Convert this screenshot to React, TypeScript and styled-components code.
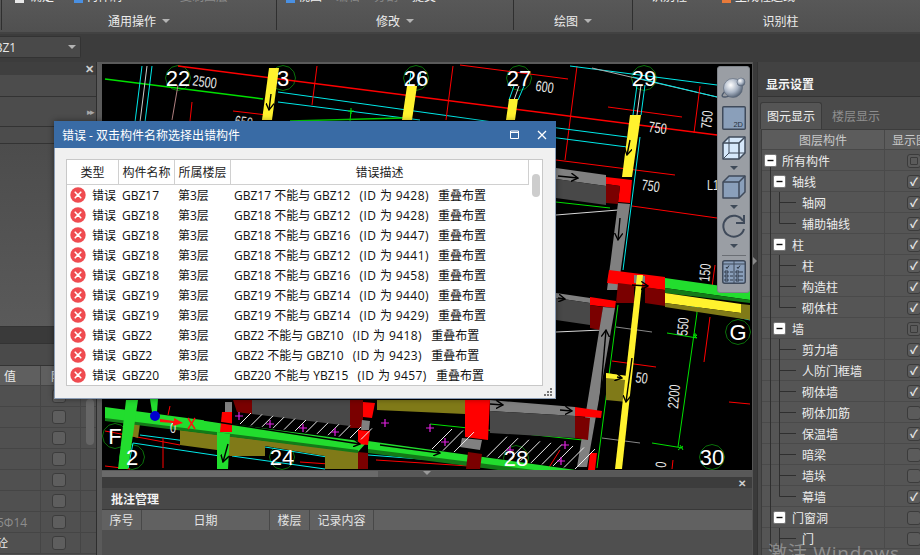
import React from "react";
import styled, { createGlobalStyle } from "styled-components";

const Global = createGlobalStyle`
  html, body { margin: 0; padding: 0; background: #3c3c3c; overflow: hidden; }
  * { box-sizing: border-box; }
  #root { width: 920px; height: 555px; overflow: hidden; }
`;
const FONT = `"Open Sans", "Noto Sans CJK SC", sans-serif`;

const Page = styled.div`
  position: relative; width: 920px; height: 555px; overflow: hidden; display: flex; flex-direction: column;
  font: 12px ${FONT}; color: #e6e6e6; background: #3c3c3c;
`;
/* ---------- ribbon ---------- */
const Ribbon = styled.div`
  flex: 0 0 34px; display: flex; padding-left: 3px; background: linear-gradient(#585858, #505050);
  border-bottom: 2px solid #424242;
`;
const RibbonGroup = styled.div<{ $w: number; $shift?: number }>`
  flex: 0 0 ${(p) => p.$w}px; height: 30px; display: flex; flex-direction: column; border-right: 1px solid #2f2f2f;
  border-left: ${(p) => (p.$w === 276 ? "1px solid #2f2f2f" : "0")}; margin-left: ${(p) => (p.$w === 276 ? "-2px" : "0")};
  padding-left: ${(p) => p.$shift ?? 0}px;
`;
const RibbonItems = styled.div`
  height: 6px; overflow: hidden; display: flex; align-items: flex-end; flex: 0 0 6px; margin-top: -3px;
`;
const RibbonItem = styled.span<{ $ml: number; $dim?: boolean }>`
  margin-left: ${(p) => p.$ml}px; color: ${(p) => (p.$dim ? "#8a8a8a" : "#f0f0f0")}; font-size: 12px; line-height: 6px;
  white-space: nowrap; display: inline-block; transform: translateY(-3px);
`;
const Swatch = styled.i<{ $c: string; $ml: number }>`
  display: block; width: 9px; height: 5px; margin-left: ${(p) => p.$ml}px; background: ${(p) => p.$c}; flex: none;
`;
const RibbonLabel = styled.div`
  flex: 1; display: flex; justify-content: center; align-items: center; gap: 6px; font-size: 12px; color: #ececec;
  padding-top: 9px;
`;
const Caret = styled.i<{ $c?: string }>`
  width: 0; height: 0; border: 4px solid transparent; border-top: 4px solid ${(p) => p.$c ?? "#b4b4b4"}; border-bottom: 0;
  border-left-width: 4px; border-right-width: 4px; display: block;
`;
/* ---------- sub bar ---------- */
const SubBar = styled.div`
  flex: 0 0 28px; padding-top: 2px; background: #3c3c3c;
`;
const Combo = styled.div`
  width: 81px; height: 22px; display: flex; align-items: center; justify-content: space-between;
  padding: 0 4px 0 0; background: #494949; border: 1px solid #333; border-left: 0; border-radius: 0 2px 2px 0;
  overflow: hidden; font-size: 12px; color: #e8e8e8;
`;
const ComboText = styled.span`
  margin-left: -14px;
`;
/* ---------- main ---------- */
const Main = styled.div`
  flex: 1; min-height: 0; display: flex;
`;
const Left = styled.div`
  flex: 0 0 97px; display: flex; flex-direction: column; overflow: hidden; background: #4e4e4e; border-right: 1px solid #2e2e2e;
`;
const LeftHead = styled.div`
  flex: 0 0 13px; background: #3f3f3f; display: flex; justify-content: flex-end; align-items: center; padding-right: 2px;
  color: #cfcfcf; font-size: 11px; font-weight: 700; line-height: 13px;
`;
const LeftBand = styled.div<{ $h: number; $bg?: string }>`
  flex: 0 0 ${(p) => p.$h}px; background: ${(p) => p.$bg ?? "#4c4c4c"}; border-bottom: 1px solid #333;
  display: flex; justify-content: flex-end; align-items: center; padding-right: 3px; color: #a8a8a8; font-size: 9px; letter-spacing: -2px;
`;
const LeftTable = styled.div`
  flex: 1; position: relative; display: flex; flex-direction: column; background: #505050;
`;
const LeftRow = styled.div<{ $head?: boolean; $h?: number }>`
  flex: 0 0 ${(p) => p.$h ?? 21}px; display: grid; grid-template-columns: 41px 40px 1fr; align-items: center;
  background: ${(p) => (p.$head ? "#5f5f5f" : "#505050")}; border-bottom: 1px solid #454545;
`;
const LeftCell = styled.div<{ $dim?: boolean; $ml?: number }>`
  height: 100%; display: flex; align-items: center; justify-content: flex-start; border-right: 1px solid #454545; white-space: nowrap;
  font-size: 12px; color: ${(p) => (p.$dim ? "#8d8d8d" : "#e8e8e8")}; padding-left: ${(p) => p.$ml ?? 0}px; overflow: hidden;
`;
const LeftValue = styled.span<{ $ml: number }>`
  margin-left: ${(p) => p.$ml}px;
`;
const LeftThumb = styled.div`
  position: absolute; left: 86px; top: 33px; width: 8px; height: 46px; background: #666; border-radius: 4px;
`;
const Square = styled.span`
  width: 14px; height: 14px; margin-left: 11px; border: 1px solid #3c3c3c; border-radius: 3px; background: #5e5e5e; display: block;
`;
const Splitter = styled.div`
  flex: 0 0 5px; background: #5a5a5a;
`;
const RightSplit = styled.div`
  flex: 0 0 5px; background: #3a3a3a; display: flex; align-items: center; justify-content: center; padding-bottom: 95px; border-left: 1px solid #555;
`;
const TinyArrow = styled.i`
  width: 0; height: 0; border: 4px solid transparent; border-left: 4px solid #8a8a8a; border-right: 0; display: block;
`;
const Center = styled.div`
  flex: 0 0 650px; display: flex; flex-direction: column; padding-top: 2px; background: #5a5a5a;
`;
const CanvasWrap = styled.div`
  position: relative; flex: 0 0 406px; background: #000; overflow: hidden;
`;
const HScroll = styled.div`
  flex: 0 0 6px; margin-top: 1px; background: linear-gradient(to right, #6a6a6a 276px, #585858 276px); display: flex; justify-content: center;
`;
const Bottom = styled.div`
  flex: 1; display: flex; flex-direction: column; background: #4f4f4f;
`;
const BottomStrip = styled.div`
  flex: 0 0 11px; background: #3c3c3c; display: flex; justify-content: flex-end; align-items: center; padding-right: 6px; font-size: 10px; font-weight: 700; color: #cfcfcf; line-height: 10px;
`;
const BottomTitle = styled.div`
  flex: 0 0 22px; background: #484848; display: flex; align-items: center; padding-left: 9px; font-size: 12px; font-weight: 700; color: #f2f2f2; border-bottom: 1px solid #383838;
`;
const BottomHead = styled.div`
  flex: 0 0 20px; display: flex; background: #616161;
`;
const BottomCol = styled.div<{ $w: number }>`
  flex: 0 0 ${(p) => p.$w}px; display: flex; align-items: center; justify-content: center; border-right: 1px solid #484848;
  font-size: 12px; color: #e4e4e4;
`;
/* ---------- float toolbar ---------- */
const Float = styled.div`
  position: absolute; right: 2px; top: 2px; width: 33px; height: 227px; background: #9a9ea4; border-radius: 3px;
  border: 1px solid #7f848a; display: flex; flex-direction: column; align-items: center; padding-top: 9px;
`;
const FloatCaret = styled.i`
  display: block; width: 0; height: 0; margin: 6px 0 5px; border: 4px solid transparent; border-top: 4px solid #3f4a58; border-bottom: 0;
`;
const FloatRule = styled.div`
  width: 24px; height: 1px; background: #6a6e74; margin: 2px 0 4px;
`;
/* ---------- right panel ---------- */
const Right = styled.div`
  flex: 0 0 163px; background: #4a4a4a; display: flex; flex-direction: column; overflow: hidden; border-left: 1px solid #333;
`;
const RightTitle = styled.div`
  flex: 0 0 35px; padding: 14px 0 0 8px; background: #424242; font-size: 12px; font-weight: 700; color: #f4f4f4; border-bottom: 1px solid #333; line-height: 18px;
`;
const Tabs = styled.div`
  flex: 0 0 32px; display: flex; align-items: flex-end; padding-left: 2px; background: #4a4a4a; gap: 10px;
`;
const Tab = styled.div<{ $on?: boolean }>`
  height: 27px; width: ${(p) => (p.$on ? "62px" : "auto")}; display: flex; align-items: center; justify-content: center; font-size: 12px;
  color: ${(p) => (p.$on ? "#efefef" : "#8f8f8f")}; background: ${(p) => (p.$on ? "#555" : "transparent")};
  border: ${(p) => (p.$on ? "1px solid #3a3a3a" : "0")}; border-bottom: 0; border-radius: 3px 3px 0 0;
`;
const TreeTable = styled.div`
  flex: 1; margin-left: 3px; border-left: 1px solid #3c3c3c; border-top: 1px solid #3c3c3c; display: flex; flex-direction: column; background: #555;
`;
const TreeHead = styled.div`
  flex: 0 0 20px; display: grid; grid-template-columns: 123px 1fr; background: #5c5c5c; color: #c8c8c8; border-bottom: 1px solid #484848; font-size: 12px;
`;
const TreeHeadCell = styled.div<{ $first?: boolean }>`
  display: flex; align-items: center; justify-content: ${(p) => (p.$first ? "center" : "flex-start")}; padding-left: ${(p) => (p.$first ? 0 : 7)}px;
  border-right: ${(p) => (p.$first ? "1px solid #484848" : "0")}; white-space: nowrap; overflow: hidden;
`;
const TreeRow = styled.div`
  flex: 0 0 21px; display: grid; grid-template-columns: 123px 1fr; border-bottom: 1px solid #4a4a4a; height: 21px;
`;
const TreeName = styled.div`
  display: flex; align-items: center; font-size: 12px; color: #ececec; border-right: 1px solid #4a4a4a; white-space: nowrap;
`;
const TreeCheckCell = styled.div`
  display: flex; align-items: center; padding-left: 22px; overflow: hidden;
`;
const TreeCheck = styled.span`
  flex: none; width: 14px; height: 14px; border: 1px solid #3b3b3b; border-radius: 3px; background: #5b5b5b; display: flex; align-items: center; justify-content: center;
  color: #e8e8e8; font-size: 11px; font-weight: 700; line-height: 12px;
`;
const PartMark = styled.i`
  width: 8px; height: 8px; border: 1px solid #3b3b3b; border-radius: 1px; display: block;
`;
const Watermark = styled.div`
  position: absolute; left: 768px; top: 538px; font: 19px ${FONT}; color: rgba(225, 225, 225, 0.42); white-space: nowrap; letter-spacing: .8px;
`;
/* ---------- dialog ---------- */
const Dialog = styled.div`
  position: absolute; left: 54px; top: 121px; width: 502px; height: 278px; background: #f0f0f0; display: flex; flex-direction: column;
  border: 1px solid #8b9db5; border-top: 0; box-shadow: 0 0 6px rgba(0,0,0,.45); color: #111;
`;
const DialogTitle = styled.div`
  flex: 0 0 27px; margin: 0 -1px; background: #396ba5; color: #fff; display: flex; align-items: center; padding: 0 9px 0 8px; font-size: 12px;
`;
const TitleText = styled.span`
  flex: 1;
`;
const TitleBtns = styled.div`
  display: flex; align-items: center; gap: 18px;
`;
const DialogBody = styled.div`
  flex: 1; padding: 11px 12px 12px 11px; display: flex;
`;
const ErrTable = styled.div`
  position: relative; flex: 1; background: #fff; border: 1px solid #c8c8c8; display: flex; flex-direction: column; overflow: hidden;
`;
const ErrHead = styled.div`
  flex: 0 0 25px; display: grid; grid-template-columns: 52px 56px 56px 298px; height: 25px;
`;
const ErrHeadCell = styled.div`
  display: flex; align-items: center; justify-content: center; border-right: 1px solid #d0d0d0; border-bottom: 1px solid #d0d0d0; font-size: 12px; color: #222; white-space: nowrap;
`;
const ErrRow = styled.div`
  flex: 0 0 20px; display: grid; grid-template-columns: 52px 56px 56px 1fr; align-items: center; font-size: 12px; color: #111;
`;
const ErrType = styled.div`
  display: flex; align-items: center; gap: 6px; padding-left: 3px;
`;
const ErrCell = styled.div`
  padding-left: 3px; white-space: pre;
`;
const IdPart = styled.span`
  margin: 0 3px 0 3px; letter-spacing: .4px;
`;
const Thumb = styled.div`
  position: absolute; right: 2px; top: 14px; width: 8px; height: 23px; background: #cdcdcd; border-radius: 4px;
`;
const Grip = styled.svg`
  position: absolute; right: 2px; bottom: 1px;
`;
/* ---------- drawing text ---------- */
const BubbleText = styled.text`
  font: 22px "Liberation Sans", sans-serif; fill: #fff; text-anchor: middle;
`;
const DimText = styled.text`
  font: 15px "Liberation Sans", sans-serif; fill: #e6e6e6; text-anchor: middle;
`;

type L = [number, number, number, number, string, number?];
const R = "#ff0000", C = "#00e8e8", G = "#00e000", W = "#d8d8d8";
const lines: L[] = [
  [105, 79, 263, 99, G, 1.5], [142, 66, 135, 122, C], [152, 66, 145, 122, C], [147, 66, 140, 122, "#cccccc"],
  [178, 66, 717, 135, R, 1.3], [278, 92, 500, 123, C], [278, 102, 420, 120, C], [233, 111, 267, 115, R],
  [317, 66, 312, 105, R], [453, 66, 446, 120, R], [178, 85, 172, 120, "#b08080"], [192, 102, 190, 121, R],
  [460, 65, 568, 79, R], [577, 66, 565, 160, R], [608, 107, 682, 117, R], [570, 66, 717, 85, C], [592, 68, 717, 97, "#aaaaaa"],
  [633, 77, 717, 97, C], [700, 86, 694, 133, R], [550, 127, 627, 137, C], [550, 137, 627, 147, C], [556, 160, 675, 175, R],
  [632, 206, 717, 218, R], [556, 215, 618, 210, W], [556, 202, 610, 208, G], [637, 85, 633, 115, C], [645, 85, 641, 115, C],
  [641, 85, 637, 115, W], [640, 137, 623, 270, C], [290, 121, 402, 118, G, 1.6], [351, 111, 350, 121, G], [514, 86, 509, 100, C], [524, 86, 518, 100, C],
  [519, 86, 514, 100, W], [411, 72, 409, 86, C], [421, 72, 418, 86, C], [715, 265, 712, 287, R],
  [618, 305, 597, 468, G], [697, 313, 678, 447, G], [667, 333, 697, 338, G], [652, 443, 683, 448, G],
  [710, 317, 704, 362, R], [612, 361, 656, 367, R], [729, 402, 750, 404, R], [673, 460, 672, 469, R],
  [556, 332, 602, 330, W], [616, 327, 652, 332, "#888"], [602, 438, 640, 443, "#888"], [665, 300, 750, 320, C],
  [140, 435, 217, 445, C], [133, 443, 220, 456, C], [105, 431, 180, 445, R], [163, 438, 163, 468, R], [133, 443, 128, 469, C],
  [105, 466, 130, 469, R], [232, 456, 325, 469, C], [300, 462, 358, 466, R], [265, 447, 358, 462, C], [368, 455, 460, 462, C],
  [376, 460, 500, 468, R], [170, 406, 168, 415, R], [560, 450, 548, 469, R],
  [695, 300, 697, 313, G], [237, 411, 362, 426, G], [430, 424, 583, 440, G],
];
type P = [string, string];
const polys: P[] = [
  ["269,68 279,68 272,120 262,120", "#fff22e"], ["407,86 417,86 412,120 402,120", "#fff22e"], ["509,99 518,99 515,120 506,120", "#fff22e"],
  ["630,115 641,115 632,177 622,177", "#fff22e"],
  ["556,168 606,175 606,186 556,179", "#808080"], ["556,179 606,186 606,205 556,198", "#484848"],
  ["606,177 632,180 630,203 618,202 620,186 606,184", "#ff0000"], ["606,184 620,186 618,204 606,203", "#7a0000"],
  ["618,203 630,204 618,290 607,290", "#808080"],
  ["665,278 750,290 750,300 665,288", "#22dd2e"], ["665,288 750,300 750,303 665,293", "#137a18"],
  ["665,293 741,304 741,313 665,303", "#fff22e"], ["741,304 750,305 750,320 665,307 665,303 741,313", "#807a18"],
  ["609,270 665,277 665,290 607,283", "#ff0000"], ["618,283 634,285 634,303 616,303", "#7a0000"], ["645,287 665,290 665,306 645,303", "#7a0000"],
  ["634,275 645,276 645,284 634,283", "#808080"],
  ["556,293 590,298 590,303 556,298", "#808080"], ["556,298 590,303 590,325 556,320", "#484848"],
  ["590,297 616,301 615,308 590,305", "#ff0000"], ["590,305 603,307 600,330 590,328", "#7a0000"],
  ["603,307 615,308 587,467 577,467", "#808080"],
  ["606,373 627,376 627,402 606,400", "#807a18"], ["606,373 627,376 626,380 606,378", "#fff22e"],
  ["637,275 643,275 622,469 615,469", "#fff22e"],
  ["490,400 575,407 575,416 490,411", "#808080"], ["490,411 575,416 575,438 490,433", "#484848"],
  ["575,407 602,411 601,418 575,416", "#ff0000"], ["575,416 590,418 588,440 575,438", "#7a0000"], ["590,453 597,453 595,470 588,470", "#ff0000"],
  /* lower beams */
  ["252,400 350,400 350,426 252,414", "#484848"], ["233,400 252,400 252,414 237,412", "#7a0000"],
  ["350,400 363,400 363,428 350,428", "#7a0000"], ["377,400 465,400 465,414 377,410", "#807a18"],
  ["180,430 358,452 358,469 325,469 325,456 265,446 265,456 230,456 217,450 180,445", "#807a18"],
  ["133,423 140,424 138,438 131,436", "#807a18"],
  ["105,407 367,442 358,452 105,420", "#22dd2e"], ["105,418 358,450 358,453 105,421", "#137a18"],
  ["368,441 590,472 590,480 368,451", "#22dd2e"], ["368,449 590,477 590,482 368,453", "#137a18"],
  ["126,400 138,400 128,469 118,469", "#22dd2e"], ["217,432 230,434 228,469 217,469", "#22dd2e"],
  ["225,402 232,402 232,412 225,412", "#808080"], ["222,412 232,412 232,432 220,432", "#ff0000"],
  ["363,402 375,403 372,418 363,417", "#ff0000"], ["362,420 370,421 369,430 361,430", "#808080"], ["358,430 370,431 368,445 358,444", "#ff0000"],
  ["358,452 368,453 368,469 358,469", "#7a0000"],
  ["465,400 490,400 488,440 465,437", "#ff0000"], ["462,438 482,440 480,450 460,447", "#808080"], ["468,452 482,454 480,469 466,469", "#7a0000"],
  ["150,399 158,399 157,412 152,412", "#22dd2e"],
];
const hatches: [number, number, number, number][] = [];
for (let i = 0; i < 12; i++) hatches.push([240 + i * 11, 424 + i * 1.4, 251 + i * 11, 413 + i * 1.4]);
for (let i = 0; i < 14; i++) {
  const x = 432 + i * 11;
  const y = 449 + (x - 432) * 0.14;
  if (x < 462 || x > 482) hatches.push([x, y, x + 20, y - 20]);
}
const pluses: [number, number][] = [[239, 416], [270, 424], [303, 428], [335, 432], [385, 423], [565, 445], [561, 461], [430, 428], [445, 442], [510, 450]];
const hex = (x: number, y: number, r: number) =>
  Array.from({ length: 12 }, (_, i) => `${(x + r * Math.cos((i * Math.PI) / 6)).toFixed(1)},${(y + r * Math.sin((i * Math.PI) / 6)).toFixed(1)}`).join(" ");
const bubbles: [string, number, number][] = [
  ["22", 178, 78], ["3", 283, 78], ["26", 416, 78], ["27", 519, 78], ["29", 644, 78], ["G", 738, 332], ["30", 712, 457], ["F", 115, 436], ["2", 132, 457], ["24", 282, 457], ["28", 516, 458],
];
const dims: [string, number, number, number][] = [
  ["2500", 204, 87, 8], ["600", 544, 92, 8], ["750", 657, 133, 8], ["750", 712, 120, -85], ["750", 650, 191, 8], ["550", 688, 327, -85],
  ["2200", 679, 397, -85], ["150", 710, 273, -85], ["50", 641, 383, 8], ["650", 243, 127, 8], ["L1", 713, 190, 0], ["0", 666, 465, -85], ["0", 173, 433, 0],
];
const arrows: [number, number, number, number][] = [
  [271, 94, 269, 110], [558, 176, 578, 178], [630, 140, 627, 155], [620, 218, 618, 240], [558, 298, 565, 299], [632, 358, 626, 402], [600, 400, 606, 330],
  [632, 285, 648, 286], [617, 377, 622, 378], [560, 410, 572, 411], [228, 444, 223, 462], [204, 420, 360, 444], [380, 445, 440, 453], [490, 404, 503, 405],
];

const Cad = () => (
  <svg width={650} height={406} viewBox="102 64 650 406" style={{ display: "block" }}>
    <defs>
      <marker id="ah" markerWidth="6" markerHeight="6" refX="5" refY="3" orient="auto">
        <path d="M0 0L5 3L0 6" fill="none" stroke="#000" strokeWidth="1" />
      </marker>
    </defs>
    {bubbles.map(([t, x, y]) => <polygon key={t + x} points={hex(x, y, 12.5)} fill="none" stroke="#0a700a" strokeWidth={1} />)}
    {lines.map(([a, b, c, d, s, w], i) => <line key={i} x1={a} y1={b} x2={c} y2={d} stroke={s} strokeWidth={w ?? 1} />)}
    {polys.map(([p, f], i) => <polygon key={i} points={p} fill={f} />)}
    {hatches.map(([a, b, c, d], i) => <line key={i} x1={a} y1={b} x2={c} y2={d} stroke="#eeeeee" strokeWidth={1} />)}
    {pluses.map(([x, y], i) => <path key={i} d={`M${x - 4} ${y}H${x + 4}M${x} ${y - 4}V${y + 4}`} stroke="#e020e0" strokeWidth={1.2} />)}
    {arrows.map(([a, b, c, d], i) => <line key={i} x1={a} y1={b} x2={c} y2={d} stroke="#000" strokeWidth={1.4} markerEnd="url(#ah)" />)}
    {bubbles.map(([t, x, y]) => <BubbleText key={t + x} x={x} y={y + 8}>{t}</BubbleText>)}
    {dims.map(([t, x, y, r]) => <DimText key={t + x} transform={`translate(${x} ${y}) rotate(${r}) scale(.72 1)`}>{t}</DimText>)}
    <path d="M351 108l0 6M348 111h6M697 335l-3 3M694 335l3 3" stroke="#00e000" />
    <path d="M697 335l-4 0M695 333v5M680 445l3 5M678 450l5-4" stroke="#00e000" />
    <circle cx={155} cy={416} r={5} fill="#0000d0" />
    <path d="M160 419l14 2 0-3 9 5-10 3 0-3-13-1z" fill="#ff1010" />
    <path d="M188 418l7 11M195 418l-7 11" stroke="#ff1010" strokeWidth={1.4} />
  </svg>
);

const SphereIcon = () => (
  <svg width={25} height={24} viewBox="0 0 25 24" style={{ display: "block", flex: "none" }}>
    <defs>
      <radialGradient id="sp" cx="38%" cy="35%" r="70%"><stop offset="0" stopColor="#fff" /><stop offset=".55" stopColor="#a9b4c4" /><stop offset="1" stopColor="#4d5a6c" /></radialGradient>
    </defs>
    <ellipse cx="11" cy="15" rx="11" ry="3.5" transform="rotate(-28 11 15)" fill="none" stroke="#4d5a6c" strokeWidth="1.4" />
    <circle cx="12" cy="12" r="9.5" fill="url(#sp)" stroke="#5a6678" strokeWidth=".6" />
    <circle cx="20" cy="6" r="4" fill="url(#sp)" stroke="#5a6678" strokeWidth=".6" />
  </svg>
);
const View2D = () => (
  <svg width={24} height={24} viewBox="0 0 24 24" style={{ display: "block", margin: "6px 0 6px", flex: "none" }}>
    <rect x=".75" y=".75" width="22.5" height="22.5" fill="#8a9fba" stroke="#3f4a5a" strokeWidth="1.5" rx="1" />
    <text x="21" y="20.5" textAnchor="end" fontSize="7.5" fontFamily="Liberation Sans" fill="#26303c">2D</text>
  </svg>
);
const Cube = ({ fill, wire }: { fill: string; wire?: boolean }) => (
  <svg width={24} height={24} viewBox="0 0 24 24" style={{ display: "block", flex: "none" }}>
    <path d="M1 7L7 1H23V17L17 23H1Z" fill={fill} stroke="#3f4a5a" strokeWidth="1.5" strokeLinejoin="round" />
    <path d="M1 7H17V23M17 7L23 1" fill="none" stroke="#3f4a5a" strokeWidth="1.5" />
    {wire && <path d="M1 23L7 17H23M7 1V17" fill="none" stroke="#3f4a5a" strokeWidth="1" />}
  </svg>
);
const Rotate = () => (
  <svg width={24} height={24} viewBox="0 0 24 24" style={{ display: "block", flex: "none" }}>
    <path d="M21 7A10.5 10.5 0 1 0 22 15" fill="none" stroke="#3f4a5a" strokeWidth="2" />
    <path d="M22 1V9H14" fill="none" stroke="#3f4a5a" strokeWidth="2" />
  </svg>
);
const ListIcon = () => (
  <svg width={24} height={24} viewBox="0 0 24 24" style={{ display: "block", flex: "none" }}>
    <rect x=".75" y=".75" width="22.5" height="22.5" rx="2" fill="#8a9fba" stroke="#3f4a5a" strokeWidth="1.5" />
    <path d="M1 4H23M12 1V23" stroke="#3f4a5a" />
    <path d="M4 7l1 1.5 2-3M15 7l1 1.5 2-3" fill="none" stroke="#26303c" />
    {[11, 15, 19].map((y) => (
      <path key={y} d={`M3 ${y}h3v2h-3zM8 ${y + 1}h3M14 ${y}h3v2h-3zM18 ${y + 1}h3`} fill="none" stroke="#26303c" strokeWidth=".9" />
    ))}
  </svg>
);
const ErrIcon = () => (
  <svg width={16} height={16} viewBox="0 0 16 16" style={{ display: "block", flex: "none" }}>
    <circle cx="8" cy="8" r="7.7" fill="#ef4b50" />
    <path d="M5.2 5.2l5.6 5.6M10.8 5.2l-5.6 5.6" stroke="#fff" strokeWidth="1.6" strokeLinecap="round" />
  </svg>
);

const errors = [
  ["GBZ17", "GBZ12", "9428"], ["GBZ18", "GBZ12", "9428"], ["GBZ18", "GBZ16", "9447"], ["GBZ18", "GBZ12", "9441"], ["GBZ18", "GBZ16", "9458"],
  ["GBZ19", "GBZ14", "9440"], ["GBZ19", "GBZ14", "9429"], ["GBZ2", "GBZ10", "9418"], ["GBZ2", "GBZ10", "9423"], ["GBZ20", "YBZ15", "9457"],
];
type T = [string, number, "on" | "off" | "part", boolean?];
const tree: T[] = [
  ["所有构件", 0, "part"], ["轴线", 1, "on"], ["轴网", 2, "on"], ["辅助轴线", 2, "on", true], ["柱", 1, "on"], ["柱", 2, "on"], ["构造柱", 2, "on"], ["砌体柱", 2, "on", true],
  ["墙", 1, "part"], ["剪力墙", 2, "on"], ["人防门框墙", 2, "on"], ["砌体墙", 2, "on"], ["砌体加筋", 2, "off"], ["保温墙", 2, "on"], ["暗梁", 2, "off"], ["墙垛", 2, "off"], ["幕墙", 2, "on", true],
  ["门窗洞", 1, "off"], ["门", 2, "off"],
];
const TreeGuide = ({ level, last }: { level: number; last?: boolean }) => {
  const w = [20, 30, 40][level];
  const box = (cx: number) => (
    <g>
      <rect x={cx - 6} y={4.5} width={12} height={12} rx={1.5} fill="#fff" stroke="#777" />
      <path d={`M${cx - 3} 10.5h6`} stroke="#111" strokeWidth={1.4} />
    </g>
  );
  return (
    <svg width={w} height={21} style={{ display: "block", flex: "none" }}>
      {level > 0 && <path d="M8.5 0V21" stroke="#2f2f2f" />}
      {level === 0 && <path d="M8.5 10V21" stroke="#2f2f2f" />}
      {level === 2 && <path d={`M17.5 0V${last ? 10.5 : 21}M17.5 10.5H34`} stroke="#2f2f2f" />}
      {level === 0 && box(8.5)}
      {level === 1 && box(17.5)}
    </svg>
  );
};

export default function App() {
  return (
    <Page>
      <Global />
      <Ribbon>
        <RibbonGroup $w={276}>
          <RibbonItems>
            <Swatch $c="#e8e8e8" $ml={13} /><RibbonItem $ml={6}>确定</RibbonItem>
            <Swatch $c="#4a90e2" $ml={20} /><RibbonItem $ml={3}>构件刷</RibbonItem>
            <RibbonItem $ml={58} $dim>复制图层</RibbonItem>
          </RibbonItems>
          <RibbonLabel>通用操作<Caret /></RibbonLabel>
        </RibbonGroup>
        <RibbonGroup $w={237}>
          <RibbonItems>
            <Swatch $c="#4a90e2" $ml={9} /><RibbonItem $ml={3}>视图</RibbonItem>
            <RibbonItem $ml={14} $dim>编辑</RibbonItem><RibbonItem $ml={14} $dim>分割</RibbonItem><RibbonItem $ml={14}>提交</RibbonItem>
          </RibbonItems>
          <RibbonLabel>修改<Caret /></RibbonLabel>
        </RibbonGroup>
        <RibbonGroup $w={119}>
          <RibbonItems />
          <RibbonLabel>绘图<Caret /></RibbonLabel>
        </RibbonGroup>
        <RibbonGroup $w={285} $shift={10} style={{ borderRight: 0 }}>
          <RibbonItems>
            <RibbonItem $ml={8}>识别柱</RibbonItem><Swatch $c="#e87a3a" $ml={35} /><RibbonItem $ml={4}>生成柱边线</RibbonItem>
          </RibbonItems>
          <RibbonLabel>识别柱</RibbonLabel>
        </RibbonGroup>
      </Ribbon>
      <SubBar>
        <Combo><ComboText>GBZ1</ComboText><Caret /></Combo>
      </SubBar>
      <Main>
        <Left>
          <LeftHead>✕</LeftHead>
          <LeftBand $h={22} />
          <LeftBand $h={30}>▸▸</LeftBand>
          <LeftBand $h={17} />
          <LeftBand $h={183} $bg="linear-gradient(#4c4c4c,#5a5a5a)" />
          <LeftBand $h={17} $bg="#3a3a3a" />
          <LeftBand $h={22} $bg="#4a4a4a" />
          <LeftTable>
            <LeftThumb />
            <LeftRow $head $h={20}><LeftCell $ml={4}>值</LeftCell><LeftCell $ml={10}>附加</LeftCell></LeftRow>
            {["", "", "", "", "", "", "5Φ14", "砼"].map((t, i) => (
              <LeftRow key={i}>
                <LeftCell $dim={i === 6}>{t && <LeftValue $ml={i === 6 ? -3 : -4}>{t}</LeftValue>}</LeftCell>
                <LeftCell><Square /></LeftCell>
              </LeftRow>
            ))}
          </LeftTable>
        </Left>
        <Splitter />
        <Center>
          <CanvasWrap>
            <Cad />
            <Float>
              <SphereIcon />
              <View2D />
              <Cube fill="#d6e8fb" wire />
              <FloatCaret />
              <Cube fill="#8a9fba" />
              <FloatCaret />
              <Rotate />
              <FloatCaret />
              <FloatRule />
              <ListIcon />
            </Float>
          </CanvasWrap>
          <HScroll><Caret $c="#999" /></HScroll>
          <Bottom>
            <BottomStrip>✕</BottomStrip>
            <BottomTitle>批注管理</BottomTitle>
            <BottomHead>
              <BottomCol $w={40}>序号</BottomCol>
              <BottomCol $w={128}>日期</BottomCol>
              <BottomCol $w={40}>楼层</BottomCol>
              <BottomCol $w={64}>记录内容</BottomCol>
            </BottomHead>
          </Bottom>
        </Center>
        <RightSplit><TinyArrow /></RightSplit>
        <Right>
          <RightTitle>显示设置</RightTitle>
          <Tabs><Tab $on>图元显示</Tab><Tab>楼层显示</Tab></Tabs>
          <TreeTable>
            <TreeHead><TreeHeadCell $first>图层构件</TreeHeadCell><TreeHeadCell>显示图元</TreeHeadCell></TreeHead>
            {tree.map(([t, lv, s, last], i) => (
              <TreeRow key={i}>
                <TreeName><TreeGuide level={lv} last={last} />{t}</TreeName>
                <TreeCheckCell>
                  <TreeCheck>{s === "on" ? "✓" : s === "part" ? <PartMark /> : null}</TreeCheck>
                </TreeCheckCell>
              </TreeRow>
            ))}
          </TreeTable>
        </Right>
      </Main>
      <Watermark>激活 Windows</Watermark>
      <Dialog>
        <DialogTitle>
          <TitleText>错误 - 双击构件名称选择出错构件</TitleText>
          <TitleBtns>
            <svg width={9} height={9} style={{ display: "block" }}><path d="M.5 2V8.5H8.5V1H.5V2.5H8.5" fill="none" stroke="#fff" strokeWidth="1" /></svg>
            <svg width={10} height={10} style={{ display: "block" }}><path d="M1 1L9 9M9 1L1 9" stroke="#fff" strokeWidth="1.3" /></svg>
          </TitleBtns>
        </DialogTitle>
        <DialogBody>
          <ErrTable>
            <ErrHead>
              <ErrHeadCell>类型</ErrHeadCell><ErrHeadCell>构件名称</ErrHeadCell><ErrHeadCell>所属楼层</ErrHeadCell><ErrHeadCell>错误描述</ErrHeadCell>
            </ErrHead>
            {errors.map(([a, b, id], i) => (
              <ErrRow key={i}>
                <ErrType><ErrIcon />错误</ErrType>
                <ErrCell>{a}</ErrCell>
                <ErrCell>第3层</ErrCell>
                <ErrCell>{`${a} 不能与 ${b}  `}<IdPart>{`(ID 为 ${id})`}</IdPart>{"  重叠布置"}</ErrCell>
              </ErrRow>
            ))}
            <Thumb />
          </ErrTable>
        </DialogBody>
        <Grip width={10} height={10} viewBox="0 0 10 10">
          <path d="M7 1h2v2h-2zM4 4h2v2h-2zM7 4h2v2h-2zM1 7h2v2h-2zM4 7h2v2h-2zM7 7h2v2h-2z" fill="#777" />
        </Grip>
      </Dialog>
    </Page>
  );
}
